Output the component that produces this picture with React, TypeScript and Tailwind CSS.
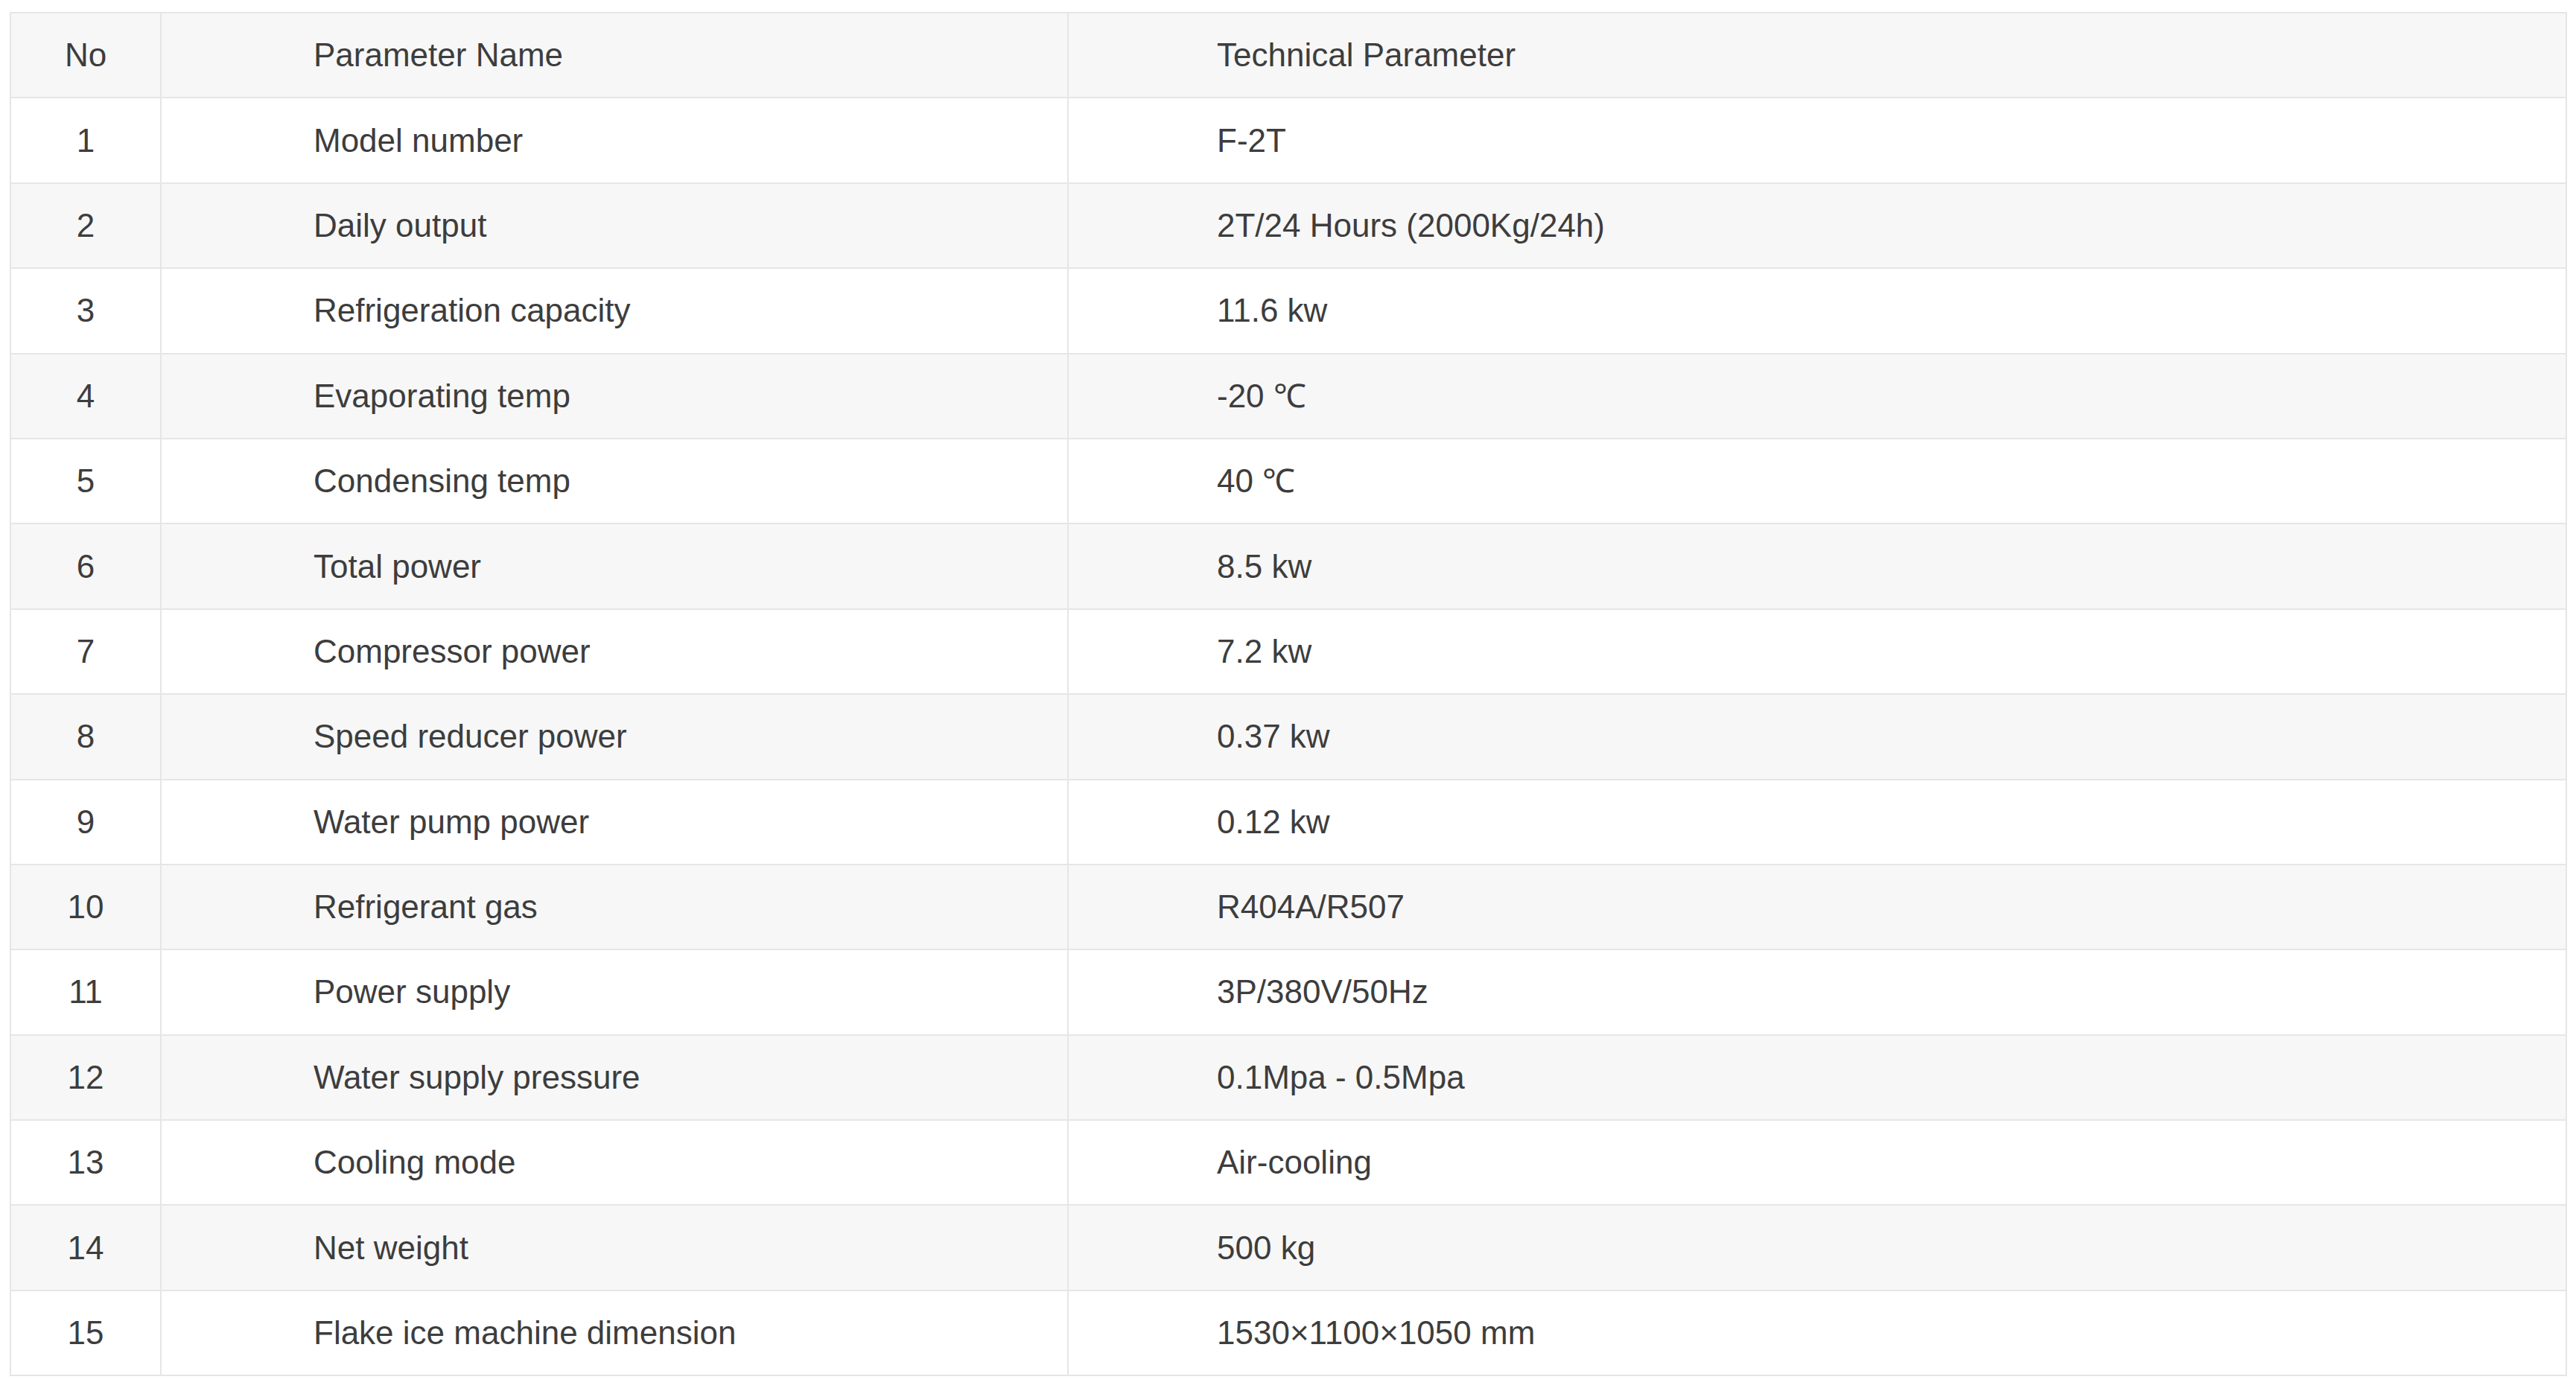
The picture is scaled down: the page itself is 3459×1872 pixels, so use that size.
const rows: [string, string][] = [
  ['Model number', 'F-2T'],
  ['Daily output', '2T/24 Hours (2000Kg/24h)'],
  ['Refrigeration capacity', '11.6 kw'],
  ['Evaporating temp', '-20 ℃'],
  ['Condensing temp', '40 ℃'],
  ['Total power', '8.5 kw'],
  ['Compressor power', '7.2 kw'],
  ['Speed reducer power', '0.37 kw'],
  ['Water pump power', '0.12 kw'],
  ['Refrigerant gas', 'R404A/R507'],
  ['Power supply', '3P/380V/50Hz'],
  ['Water supply pressure', '0.1Mpa - 0.5Mpa'],
  ['Cooling mode', 'Air-cooling'],
  ['Net weight', '500 kg'],
  ['Flake ice machine dimension', '1530×1100×1050 mm'],
]

function Row({ no, name, value, shaded, first }: { no: string; name: string; value: string; shaded: boolean; first?: boolean }) {
  return (
    <div
      className={`grid grid-cols-[202px_1218px_1fr] ${first ? 'h-[112.4px]' : 'h-[114.4px] border-t-2 border-[#e6e6e6]'} ${shaded ? 'bg-[#f7f7f7]' : 'bg-white'}`}
    >
      <div className="flex items-center justify-center border-r-2 border-[#e6e6e6]">{no}</div>
      <div className="flex items-center pl-[204px] border-r-2 border-[#e6e6e6]">{name}</div>
      <div className="flex items-center pl-[199px]">{value}</div>
    </div>
  )
}

export default function App() {
  return (
    <div className="min-h-screen bg-white pt-[16px] pl-[13px] pr-[12px] font-['Liberation_Sans',Arial,sans-serif] text-[44px] text-[#3d3d3d]">
      <div className="border-2 border-[#e6e6e6]">
        <Row no="No" name="Parameter Name" value="Technical Parameter" shaded first />
        {rows.map(([name, value], i) => (
          <Row key={name} no={String(i + 1)} name={name} value={value} shaded={i % 2 === 1} />
        ))}
      </div>
    </div>
  )
}
